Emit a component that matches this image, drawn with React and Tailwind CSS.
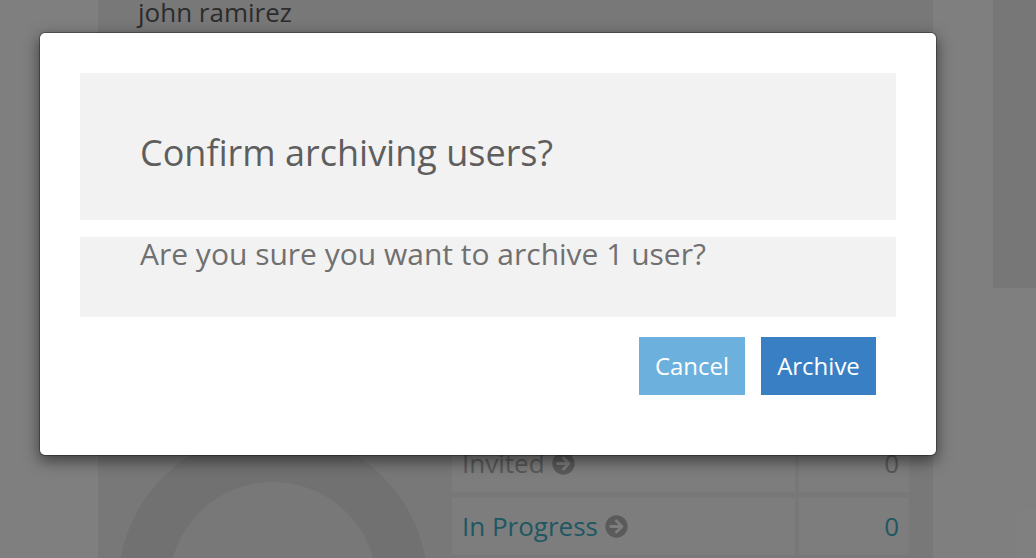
import React from 'react';
import { FaArrowCircleRight } from 'react-icons/fa';

const rows = [
  { label: 'Invited', count: 0, text: 'text-[#b0b0b0]' },
  { label: 'In Progress', count: 0, text: 'text-[#3fb0c4]' },
];

const App = () => {
  return (
    <div className="relative h-[558px] w-[1036px] overflow-hidden bg-white font-['Open_Sans',sans-serif]">
      {/* Page behind the dialog */}
      <div className="flex h-full pl-[98px]">
        <div className="w-[835px] shrink-0 bg-[#f1f1f1] pl-10">
          <div className="h-[24px] text-[26px] leading-[24px] text-[#585858]">john ramirez</div>
          <div className="mt-[411px] flex">
            <svg width="315" height="315" viewBox="0 0 315 315" className="-ml-[22px] -mt-[6px] shrink-0">
              <circle cx="157" cy="157" r="129.5" fill="none" stroke="#e2e2e2" strokeWidth="51" />
            </svg>
            <div className="ml-[21px] flex flex-col gap-1.5">
              {rows.map((r) => (
                <div key={r.label} className={`flex h-[57px] gap-1 text-[26px] ${r.text}`}>
                  <div className="flex w-[343px] items-center gap-[7px] bg-[#fbfbfb] pl-2.5">
                    {r.label}
                    <FaArrowCircleRight className="text-[23px] text-[#b4b4b4]" />
                  </div>
                  <div className="flex w-[110px] items-center justify-end bg-[#fbfbfb] pr-2.5">{r.count}</div>
                </div>
              ))}
            </div>
          </div>
        </div>
        <div className="ml-[60px] h-[288px] flex-1 bg-[#eeeeee]" />
      </div>

      {/* Overlay */}
      <div className="absolute inset-0 bg-black/50" />

      {/* Dialog */}
      <div className="absolute left-[39px] top-[32px] h-[424px] w-[898px] rounded-md border border-black/30 bg-white bg-clip-padding p-10 shadow-[0_5px_15px_rgba(0,0,0,0.5)]">
        <div className="flex h-[147px] items-center bg-[#f2f2f2] pl-[60px] pt-3 text-4xl text-[#5e5e5e]">
          Confirm archiving users?
        </div>
        <div className="mt-[17px] h-[80px] bg-[#f2f2f2] pl-[60px] text-[30px] leading-[34px] text-[#707070]">
          Are you sure you want to archive 1 user?
        </div>
        <div className="mt-5 flex justify-end gap-4 pr-5">
          <button className="h-[58px] w-[106px] bg-[#6cb0dd] text-2xl text-white">Cancel</button>
          <button className="h-[58px] w-[115px] bg-[#397fc4] text-2xl text-white">Archive</button>
        </div>
      </div>
    </div>
  );
};

export default App;
